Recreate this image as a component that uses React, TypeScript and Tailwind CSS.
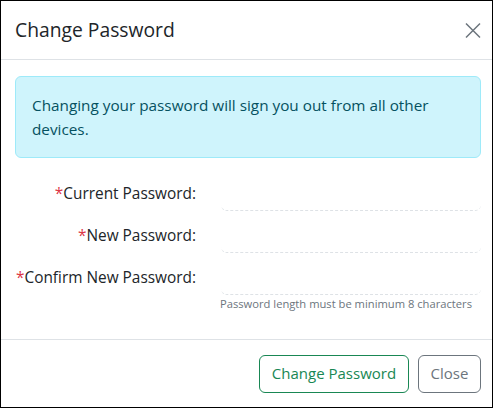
import React from 'react';

const font = { fontFamily: '"Open Sans", "Noto Sans", Arial, sans-serif' };

function Field({ label }: { label: string }) {
  return (
    <div className="flex h-[42px]">
      <label className="w-[181px] shrink-0 pt-[9px] text-right text-[15.4px] leading-[24px] text-[#212529]">
        <span className="text-[#dc3545]">*</span>
        {label}
      </label>
      <div className="ml-[25px] flex-1">
        <input type="password" className="h-[38px] w-full rounded-[6px] border-b border-dashed border-[#dee2e6] px-3 text-[15px] outline-none" />
      </div>
    </div>
  );
}

export default function App() {
  return (
    <div className="h-[409px] w-[494px] bg-white" style={font}>
      <div className="flex h-[408px] w-[493px] flex-col border border-black">
        {/* Header */}
        <div className="flex h-[59px] shrink-0 items-center justify-between border-b border-[#dee2e6] pl-[14px] pr-[11px]">
          <h5 className="text-[19.3px] font-normal leading-[24px] text-[#212529]">Change Password</h5>
          <button className="flex h-[16px] w-[16px] items-center justify-center text-[#6c757d]">
            <svg width="17" height="17" viewBox="0 0 16 16" fill="none" stroke="currentColor" strokeWidth="1.5">
              <path d="M1 1L15 15M15 1L1 15" />
            </svg>
          </button>
        </div>
        {/* Body */}
        <div className="flex-1 pl-[14px] pr-[11px] pt-[16px]">
          <div className="rounded-[6px] border border-[#9eeaf9] bg-[#cff4fc] px-[16px] py-[16px] text-[15.3px] leading-[24px] text-[#055160]">
            Changing your password will sign you out from all other devices.
          </div>
          <div className="mt-[15px]">
            <Field label="Current Password:" />
            <Field label="New Password:" />
            <Field label="Confirm New Password:" />
            <div className="-mt-[3px] ml-[205px] text-[11.2px] leading-[16px] text-[#6c757d]">
              Password length must be minimum 8 characters
            </div>
          </div>
        </div>
        {/* Footer */}
        <div className="flex h-[68px] shrink-0 items-center justify-end gap-[9px] border-t border-[#dee2e6] pl-[14px] pr-[11px]">
          <button className="h-[38px] w-[150px] rounded-[6px] border border-[#198754] text-[15px] text-[#198754]">
            Change Password
          </button>
          <button className="h-[38px] w-[63px] rounded-[6px] border border-[#6c757d] text-[15px] text-[#6c757d]">
            Close
          </button>
        </div>
      </div>
    </div>
  );
}
